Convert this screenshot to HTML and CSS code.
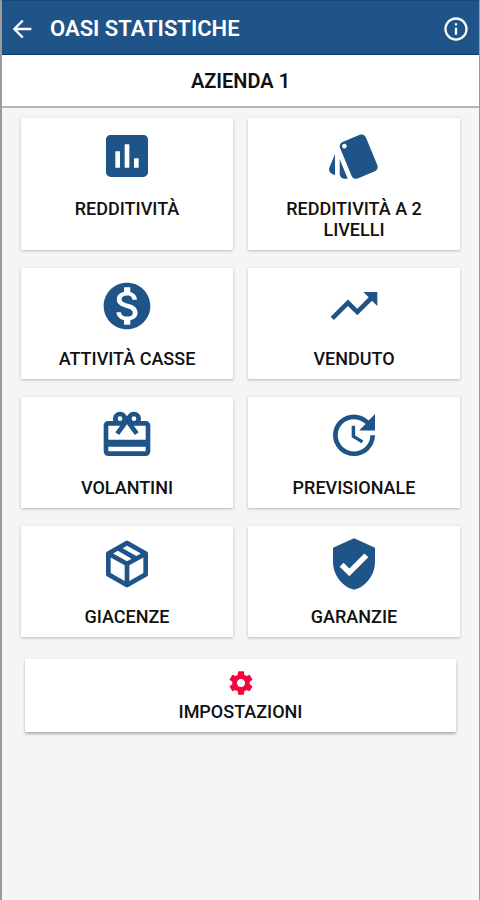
FILE: index.html
```html
<!DOCTYPE html>
<html lang="it">
<head>
<meta charset="utf-8">
<meta name="viewport" content="width=device-width, initial-scale=1">
<title>OASI STATISTICHE</title>
<link rel="stylesheet" href="styles.css">
</head>
<body>
<div class="app">
  <header class="topbar">
    <button class="icon-button" type="button">
      <svg viewBox="0 0 24 24" aria-hidden="true"><path d="M20 11H7.83l5.59-5.59L12 4l-8 8 8 8 1.41-1.41L7.83 13H20z"/></svg>
    </button>
    <h1 class="title">OASI STATISTICHE</h1>
    <button class="icon-button" type="button">
      <svg viewBox="0 0 24 24" aria-hidden="true"><path d="M11 7h2v2h-2zm0 4h2v6h-2zm1-9C6.48 2 2 6.48 2 12s4.48 10 10 10 10-4.48 10-10S17.52 2 12 2zm0 18c-4.41 0-8-3.59-8-8s3.59-8 8-8 8 3.59 8 8-3.59 8-8 8z"/></svg>
    </button>
  </header>
  <h2 class="company">AZIENDA 1</h2>
  <main class="content">
    <div class="grid">
      <button class="card" type="button">
        <svg class="card-icon" viewBox="0 0 24 24" aria-hidden="true"><path d="M19 3H5c-1.100 0-2 .9-2 2v14c0 1.100.9 2 2 2h14c1.100 0 2-.9 2-2V5c0-1.100-.9-2-2-2zM9 17H7v-7h2v7zm4 0h-2V7h2v10zm4 0h-2v-4h2v4z"/></svg>
        <span>REDDITIVITÀ</span>
      </button>
      <button class="card" type="button">
        <svg class="card-icon" viewBox="0 0 24 24" aria-hidden="true"><path d="M2.530 19.650l1.340.56v-9.030l-2.430 5.860c-.41 1.020.08 2.190 1.090 2.610zm19.500-3.700L17.070 3.980c-.31-.75-1.040-1.210-1.810-1.230-.26 0-.53.04-.79.15L7.100 5.950c-.75.31-1.210 1.030-1.230 1.800-.01.27.04.54.15.8l4.960 11.970c.31.76 1.050 1.220 1.830 1.230.26 0 .52-.05.77-.15l7.360-3.050c1.020-.42 1.510-1.590 1.090-2.600zM7.880 8.750c-.55 0-1-.45-1-1s.45-1 1-1 1 .45 1 1-.45 1-1 1zm-2 11c0 1.100.9 2 2 2h1.450l-3.450-8.340v6.340z"/></svg>
        <span>REDDITIVITÀ A 2 LIVELLI</span>
      </button>
      <button class="card" type="button">
        <svg class="card-icon" viewBox="0 0 24 24" aria-hidden="true"><path d="M12 2C6.480 2 2 6.480 2 12s4.480 10 10 10 10-4.480 10-10S17.520 2 12 2zm1.410 16.090V20h-2.670v-1.930c-1.710-.36-3.160-1.460-3.270-3.400h1.960c.1 1.050.82 1.870 2.650 1.870 1.960 0 2.400-.98 2.400-1.590 0-.83-.44-1.610-2.670-2.140-2.480-.6-4.180-1.620-4.180-3.670 0-1.720 1.390-2.840 3.110-3.210V4h2.670v1.950c1.860.45 2.790 1.860 2.850 3.390H14.300c-.05-1.110-.64-1.870-2.220-1.870-1.500 0-2.400.68-2.400 1.640 0 .84.65 1.390 2.670 1.910s4.180 1.390 4.180 3.910c-.01 1.830-1.380 2.830-3.120 3.160z"/></svg>
        <span>ATTIVITÀ CASSE</span>
      </button>
      <button class="card" type="button">
        <svg class="card-icon" viewBox="0 0 24 24" aria-hidden="true"><path d="M16 6l2.290 2.290-4.880 4.880-4-4L2 16.590 3.410 18l6-6 4 4 6.300-6.290L22 12V6z"/></svg>
        <span>VENDUTO</span>
      </button>
      <button class="card" type="button">
        <svg class="card-icon" viewBox="0 0 24 24" aria-hidden="true"><path d="M20,14H4V8H9.080L7,10.830L8.620,12L11,8.760L12,7.400L13,8.760L15.380,12L17,10.830L14.920,8H20M20,19H4V17H20M9,4A1,1 0 0,1 10,5A1,1 0 0,1 9,6A1,1 0 0,1 8,5A1,1 0 0,1 9,4M15,4A1,1 0 0,1 16,5A1,1 0 0,1 15,6A1,1 0 0,1 14,5A1,1 0 0,1 15,4M20,6H17.820C17.930,5.690 18,5.350 18,5A3,3 0 0,0 15,2C13.950,2 13.040,2.540 12.500,3.350L12,4L11.500,3.340C10.960,2.540 10.050,2 9,2A3,3 0 0,0 6,5C6,5.350 6.070,5.690 6.180,6H4C2.890,6 2,6.890 2,8V19A2,2 0 0,0 4,21H20A2,2 0 0,0 22,19V8C22,6.890 21.100,6 20,6Z"/></svg>
        <span>VOLANTINI</span>
      </button>
      <button class="card" type="button">
        <svg class="card-icon" viewBox="0 0 24 24" aria-hidden="true"><path d="M21 10.120h-6.780l2.740-2.820c-2.730-2.700-7.150-2.800-9.880-.1-2.730 2.710-2.730 7.080 0 9.790 2.730 2.710 7.150 2.710 9.880 0C18.320 15.650 19 14.080 19 12.100h2c0 1.980-.88 4.550-2.640 6.290-3.510 3.480-9.210 3.480-12.720 0-3.500-3.470-3.530-9.110-.02-12.580 3.510-3.470 9.140-3.470 12.650 0L21 3v7.120zM12.500 8v4.250l3.500 2.080-.72 1.210L11 13V8h1.500z"/></svg>
        <span>PREVISIONALE</span>
      </button>
      <button class="card" type="button">
        <svg class="card-icon" viewBox="0 0 24 24" aria-hidden="true"><path d="M21,16.500C21,16.880 20.790,17.210 20.470,17.380L12.570,21.820C12.410,21.940 12.210,22 12,22C11.790,22 11.590,21.940 11.430,21.820L3.530,17.380C3.210,17.210 3,16.880 3,16.500V7.500C3,7.120 3.210,6.790 3.530,6.620L11.430,2.180C11.590,2.060 11.790,2 12,2C12.210,2 12.410,2.060 12.570,2.180L20.470,6.620C20.790,6.790 21,7.120 21,7.500V16.500M12,4.150L10.110,5.220L16,8.610L17.960,7.500L12,4.150M6.040,7.500L12,10.850L13.960,9.750L8.080,6.350L6.040,7.500M5,15.910L11,19.290V12.580L5,9.210V15.910M19,15.910V9.210L13,12.580V19.290L19,15.910Z"/></svg>
        <span>GIACENZE</span>
      </button>
      <button class="card" type="button">
        <svg class="card-icon" viewBox="0 0 24 24" aria-hidden="true"><path d="M12 1L3 5v6c0 5.550 3.840 10.740 9 12 5.160-1.260 9-6.450 9-12V5l-9-4z"/><path class="check" d="M6.700 12.300L10 15.600l7.300-7.300"/></svg>
        <span>GARANZIE</span>
      </button>
    </div>
    <button class="card settings" type="button">
      <svg class="settings-icon" viewBox="0 0 24 24" aria-hidden="true"><path d="M19.430 12.980c.04-.32.07-.64.07-.98s-.03-.66-.07-.98l2.110-1.650c.19-.15.24-.42.12-.64l-2-3.460c-.12-.22-.39-.3-.61-.22l-2.490 1c-.52-.4-1.080-.73-1.690-.98l-.38-2.650C14.460 2.180 14.250 2 14 2h-4c-.25 0-.46.18-.49.42l-.38 2.650c-.61.25-1.170.59-1.690.98l-2.490-1c-.23-.09-.49 0-.61.22l-2 3.460c-.13.22-.07.49.12.64l2.110 1.650c-.04.32-.07.65-.07.98s.03.66.07.98l-2.110 1.650c-.19.15-.24.42-.12.64l2 3.460c.12.22.39.3.61.22l2.490-1c.52.4 1.080.73 1.690.98l.38 2.650c.03.24.24.42.49.42h4c.25 0 .46-.18.49-.42l.38-2.650c.61-.25 1.170-.59 1.690-.98l2.490 1c.23.09.49 0 .61-.22l2-3.460c.12-.22.07-.49-.12-.64l-2.110-1.650zM12 15.500c-1.930 0-3.500-1.570-3.500-3.500s1.570-3.500 3.500-3.500 3.500 1.570 3.500 3.500-1.570 3.500-3.500 3.500z"/></svg>
      <span>IMPOSTAZIONI</span>
    </button>
  </main>
</div>
</body>
</html>
```
FILE: styles.css
```css
* {
  box-sizing: border-box;
}

body {
  margin: 0;
  font-family: Roboto, "Liberation Sans", sans-serif;
  color: #111;
  background: #f5f5f5;
}

.app {
  min-height: 100vh;
  border-left: 2px solid #9c9c9c;
  border-right: 1px solid #9c9c9c;
}

.topbar {
  display: flex;
  align-items: center;
  gap: 14px;
  padding: 14px 9px 11px 6px;
  color: #fff;
  background: #1f5488;
  border-top: 1px solid #174878;
  border-bottom: 1px solid #0b3a70;
}

.icon-button {
  flex: none;
  padding: 0;
  border: 0;
  color: inherit;
  background: none;
}

.icon-button svg {
  display: block;
  width: 28px;
  height: 28px;
  fill: currentColor;
}

.title {
  flex: 1;
  margin: 0;
  font-size: 22px;
  line-height: 26px;
  font-weight: 600;
}

.company {
  margin: 0;
  padding: 15px 0 14px;
  border-bottom: 2px solid #b4b4b4;
  font-size: 20px;
  line-height: 22px;
  font-weight: 600;
  text-align: center;
  background: #fff;
}

.content {
  padding: 10px 19px 20px;
}

.grid {
  display: grid;
  grid-template-columns: 1fr 1fr;
  gap: 18px 15px;
}

.card {
  display: flex;
  flex-direction: column;
  align-items: center;
  gap: 14px;
  padding: 10px 32px;
  border: 0;
  border-radius: 1px;
  font: 500 18px/21px Roboto, "Liberation Sans", sans-serif;
  color: #111;
  background: #fff;
  box-shadow: 0 1px 3px rgba(0, 0, 0, 0.25);
}

.card-icon {
  width: 56px;
  height: 56px;
  fill: #1f5488;
}

.check {
  fill: none;
  stroke: #fff;
  stroke-width: 2.4;
}

.settings {
  width: calc(100% - 8px);
  margin: 22px 4px 0;
  gap: 4px;
  box-shadow: 0 2px 3px rgba(0, 0, 0, 0.3);
}

.settings-icon {
  width: 28px;
  height: 28px;
  fill: #f5053d;
}
```
